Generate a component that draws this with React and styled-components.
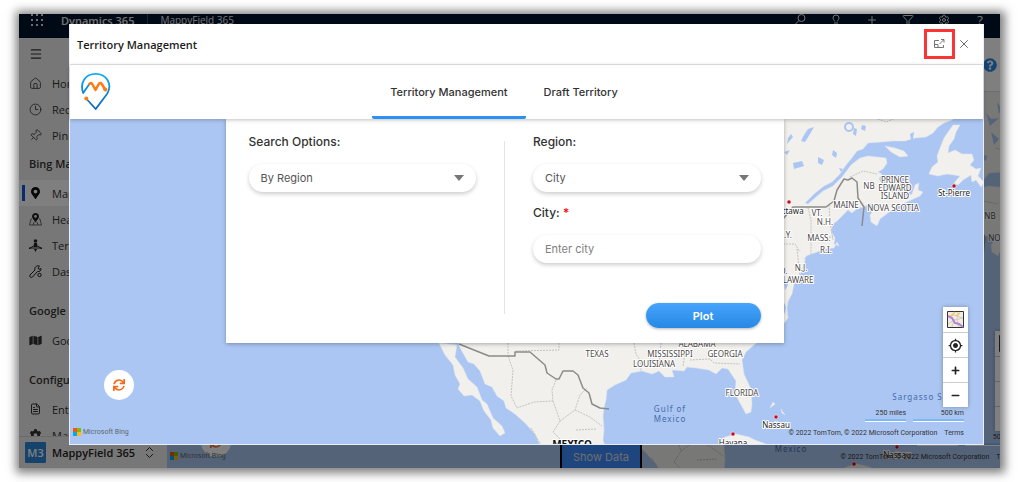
import React from 'react';
import styled, { createGlobalStyle } from 'styled-components';
import {
    ChevronsUpDown, Clock3, FileText, Filter, House, Lightbulb, Menu, Pin, Plus, Settings, X,
} from 'lucide-react';
import { FaCog, FaMap, FaMapMarkedAlt, FaMapMarkerAlt, FaMinus, FaPlus, FaQuestionCircle, FaSync } from 'react-icons/fa';
import { MdMyLocation } from 'react-icons/md';

const uiFont = '"Open Sans", "Noto Sans", sans-serif';
const formFont = 'Inter, Roboto, sans-serif';
const smallFont = 'Roboto, Inter, sans-serif';

const GlobalStyle = createGlobalStyle`
* {
    box-sizing: border-box;
}

body {
    margin: 0;
    background: #fff;
    font-family: ${uiFont};
}

button, input, select {
    font-family: inherit;
}
`;

const Page = styled.div`
    min-height: 100vh;
    padding: 14px 20px 14px 19px;
    display: flex;
`;

// the app and the dialog share one grid cell, so the dialog lies over the app
const Frame = styled.div`
    flex: 1;
    min-width: 0;
    display: grid;
    grid-template: minmax(0, 1fr) / minmax(0, 1fr);
    height: calc(100vh - 28px);
    overflow: hidden;
    box-shadow: 1px 1px 9px 4px rgba(0, 0, 0, 0.5);

    > * {
        grid-area: 1 / 1;
    }
`;

const Shell = styled.div`
    display: flex;
    flex-direction: column;
    min-width: 0;
    min-height: 0;
    overflow: hidden;
    background: #fff;
`;

const TopBar = styled.header`
    display: flex;
    align-items: flex-start;
    height: 24px;
    flex: none;
    padding: 0 14px 0 12px;
    background: #00142e;
    color: #e8e8e8;
    font-size: 11px;
    line-height: 13px;
`;

const Waffle = styled.svg`
    width: 12px;
    height: 12px;
    margin-right: 18px;
`;

const Brand = styled.b`
    font-weight: 600;
    padding-right: 13px;
    border-right: 1px solid #33445c;
`;

const AppName = styled.span`
    font-size: 10px;
    padding-left: 12px;
    flex: 1;
`;

const TopIcons = styled.div`
    display: flex;
    gap: 24px;

    span {
        width: 12px;
        text-align: center;
        font-size: 13px;
    }
`;

const Body = styled.div`
    flex: 1;
    min-height: 0;
    display: flex;
`;

const Sidebar = styled.nav`
    width: 148px;
    flex: none;
    display: flex;
    flex-direction: column;
    background: #efefef;
    color: #333;
    font-size: 11px;
`;

const NavList = styled.div`
    flex: 1;
    min-height: 0;
    overflow: hidden;
`;

const MenuRow = styled.div`
    display: flex;
    align-items: center;
    height: 32px;
    padding-left: 10px;
`;

const NavHeading = styled.div`
    height: 32px;
    line-height: 32px;
    padding-left: 10px;
    font-weight: 600;
    margin-top: ${({ $spaced }) => ($spaced ? '11px' : '0')};
`;

const NavItem = styled.a`
    display: flex;
    align-items: center;
    gap: 10px;
    height: 26px;
    padding-left: 7px;
    border-left: 3px solid transparent;
    color: inherit;
    text-decoration: none;
    white-space: nowrap;
    background: ${({ $active }) => ($active ? '#fff' : 'none')};

    svg {
        flex: none;
        width: 13px;
    }
`;

const ActiveMark = styled.i`
    width: 3px;
    height: 16px;
    margin: 0 -6px 0 -7px;
    background: #0a5be0;
`;

const AreaSwitch = styled.button`
    display: flex;
    align-items: center;
    gap: 6px;
    height: 32px;
    flex: none;
    padding: 0 10px 0 6px;
    border: 0;
    border-top: 1px solid #d5d5d5;
    background: #efefef;
    color: #222;
    font-size: 11px;
    font-weight: 600;
    white-space: nowrap;

    span {
        flex: 1;
        text-align: left;
    }
`;

const AreaBadge = styled.i`
    width: 21px;
    height: 21px;
    line-height: 21px;
    background: #2a86d8;
    color: #fff;
    font-style: normal;
    font-size: 11px;
    border-radius: 1px;
`;

const Workspace = styled.main`
    flex: 1;
    min-width: 0;
    overflow: hidden;
    display: flex;
    flex-direction: column;
`;

const WorkspaceBar = styled.div`
    height: 54px;
    flex: none;
    display: flex;
    align-items: center;
    justify-content: flex-end;
    padding-right: 3px;
    border-bottom: 1px solid #ddd;
    color: #2a86e8;
`;

const WideMap = styled.div`
    flex: 1;
    min-height: 0;
    margin-right: -35px;
    display: grid;
`;

const ShowData = styled.button`
    position: absolute;
    left: 50%;
    bottom: 0;
    transform: translateX(-50%);
    width: 82px;
    height: 23px;
    padding: 0;
    border: solid #000;
    border-width: 0 2px;
    background: #3f8bff;
    color: #ddd;
    font-family: ${formFont};
    font-size: 11px;
`;

const Overlay = styled.div`
    position: relative;
    display: flex;
    min-width: 0;
    min-height: 0;
    padding: 10px 16px 23px 50px;
    background: rgba(0, 0, 0, 0.5);
`;

const Dialog = styled.section`
    flex: 1;
    min-width: 0;
    display: flex;
    flex-direction: column;
    background: #fff;
    border: solid #e8eefb;
    border-width: 0 1px 1px;
`;

const TitleBar = styled.div`
    display: flex;
    align-items: center;
    height: 41px;
    flex: none;
    padding: 0 10px 0 7px;
    border-bottom: 1px solid #e6e6e6;
`;

const Title = styled.h1`
    flex: 1;
    margin: 0;
    font-size: 11px;
    font-weight: 600;
    color: #1c1c1c;
`;

const TitleButton = styled.button`
    display: flex;
    align-items: center;
    justify-content: center;
    width: ${({ $marked }) => ($marked ? '31px' : '18px')};
    height: 30px;
    padding: 0;
    border: ${({ $marked }) => ($marked ? '3px solid #fb3535' : '0')};
    background: none;
    color: #555;
`;

const TabBar = styled.div`
    position: relative;
    z-index: 1;
    display: flex;
    height: 54px;
    flex: none;
    padding: 0 45px 0 10px;
    background: #fff;
    box-shadow: 0 1px 4px rgba(0, 0, 0, 0.25);
`;

const Logo = styled.svg`
    width: 32px;
    height: 40px;
    margin-top: 7px;
    margin-right: -42px;
`;

const Tabs = styled.div`
    flex: 1;
    display: flex;
    justify-content: center;
`;

const Tab = styled.button`
    padding: 0 18px;
    border: 0;
    border-radius: 2px;
    border-top: 3px solid transparent;
    border-bottom: 3px solid ${({ $active }) => ($active ? '#2b90f3' : 'transparent')};
    background: none;
    color: #333;
    font-family: ${formFont};
    font-size: 11px;
    font-weight: 500;
`;

const MapFrame = styled.div`
    position: relative;
    flex: 1;
    min-width: 0;
    min-height: 0;
    overflow: hidden;
    background: #abc6f2;
`;

const MapDrawing = styled.svg`
    position: absolute;
    inset: 0;
    width: 100%;
    height: 100%;
    font-family: "Noto Sans", "Open Sans", sans-serif;
`;

const PanelRow = styled.div`
    position: relative;
    display: flex;
    justify-content: center;
    padding-right: 44px;
`;

const Panel = styled.form`
    display: grid;
    grid-template-columns: 1fr 1px 1fr;
    gap: 28px;
    width: 558px;
    max-width: 100%;
    padding: 13px 23px 15px;
    background: #fff;
    box-shadow: 0 1px 4px rgba(0, 0, 0, 0.3);
`;

const Divider = styled.div`
    margin: 9px 0 14px;
    background: #e4e4e4;
`;

const Column = styled.div`
    display: flex;
    flex-direction: column;
    min-width: 0;
    font-family: ${formFont};
`;

const Label = styled.label`
    margin-bottom: 12px;
    font-size: 12px;
    font-weight: 500;
    line-height: 20px;
    color: #333;

    em {
        color: #f00;
        font-style: normal;
    }
`;

const Field = styled.div`
    display: flex;
    align-items: center;
    height: 28px;
    margin-bottom: 11px;
    padding: 0 12px;
    border-radius: 14px;
    background: #fff;
    box-shadow: 0 2px 4px rgba(0, 0, 0, 0.2);

    select, input {
        flex: 1;
        min-width: 0;
        padding: 0;
        border: 0;
        outline: 0;
        appearance: none;
        background: none;
        color: #555;
        font-size: 11px;
    }

    input::placeholder {
        color: #808080;
        opacity: 1;
    }
`;

const Arrow = styled.i`
    border: 5px solid transparent;
    border-top: 6px solid #777;
    border-bottom: 0;
`;

const PlotButton = styled.button`
    align-self: flex-end;
    width: 115px;
    height: 25px;
    margin-top: 29px;
    border: 0;
    border-radius: 13px;
    background: linear-gradient(#47a3fc, #2689e4);
    box-shadow: 0 1px 3px rgba(0, 0, 0, 0.3);
    color: #fff;
    font-size: 11px;
    font-weight: 600;
`;

const Refresh = styled.button`
    position: absolute;
    left: 34px;
    bottom: ${({ $low }) => ($low ? '11px' : '44px')};
    display: flex;
    align-items: center;
    justify-content: center;
    width: 30px;
    height: 30px;
    padding: 0;
    border: 0;
    border-radius: 50%;
    background: #fff;
    color: #f26a1b;
`;

const BingMark = styled.div`
    position: absolute;
    left: 3px;
    bottom: 7px;
    display: flex;
    align-items: center;
    gap: 2px;
    color: #62666e;
    font-family: ${smallFont};
    font-size: 7px;
    line-height: 10px;
`;

const Controls = styled.div`
    position: absolute;
    right: 15px;
    bottom: 37px;
    display: grid;
    box-shadow: 0 0 4px rgba(0, 0, 0, 0.3);

    button {
        display: flex;
        align-items: center;
        justify-content: center;
        width: 25px;
        height: 25px;
        padding: 0;
        border: 0;
        border-top: 1px solid #ccc;
        background: #fff;
        color: #222;
    }

    button:first-child {
        border-top: 0;
    }
`;

const Legend = styled.div`
    position: absolute;
    right: 19px;
    bottom: 5px;
    display: grid;
    justify-items: end;
    gap: 7px;
    color: #333;
    font-family: ${smallFont};
    font-size: 7px;
    line-height: 11px;

    div {
        display: flex;
        gap: 7px;
    }

    a {
        color: inherit;
        text-decoration: none;
    }
`;

const Scale = styled.span`
    width: ${({ $wide }) => ($wide ? '51px' : '41px')};
    text-align: right;
    border-bottom: 2px solid #7ab8fa;
    box-shadow: 0 1px #fff;
`;

const places = [
    ['NB', 869, 189], ['PRINCE', 895, 183], ['EDWARD', 895, 191], ['ISLAND', 895, 199],
    ['NOVA SCOTIA', 893, 211], ['MAINE', 846, 208], ['VT.', 817, 216], ['N.H.', 825, 225],
    ['MASS.', 819, 241], ['R.I.', 826, 253], ['N.Y.', 785, 238], ['N.J.', 801, 271],
    ['MD.', 780, 274], ['DELAWARE', 793, 283], ['ALABAMA', 697, 347], ['TEXAS', 597, 357],
    ['MISSISSIPPI', 670, 357], ['GEORGIA', 725, 357], ['LOUISIANA', 654, 367], ['FLORIDA', 742, 396],
];

const towns = [
    ['Ottawa', 790, 214, 789, 202], ['St-Pierre', 954, 196, 954, 186],
    ['Nassau', 776, 428, 776, 417], ['Havana', 733, 446, 733, 434],
];

const NorthAmerica = ({ viewBox, align }) => (
    <MapDrawing viewBox={viewBox} preserveAspectRatio={`${align} slice`}>
        <g fill="#f1f0ed" stroke="#dfe5ea" strokeWidth="0.5">
            <path d="M430 50H990L978 104L962 113L952 120L944 123L938 127L933 133L926 137L915 138L905 141L893 141L881 142L868 143L863 149L857 151L851 159L846 165L840 174L832 182L824 186L814 194L805 203L808 204L823 191L833 186L842 177L851 165L860 158L868 156L877 157L886 158L887 163L883 169L878 172L882 174L879 179L883 186L892 192L901 198L912 194L915 185L919 183L918 190L923 192L920 196L909 201L897 206L888 213L880 219L877 226L871 222L870 215L877 206L871 203L864 207L858 208L852 213L848 210L843 215L837 221L833 224L831 231L835 238L834 244L839 246L837 242L834 248L826 249L817 252L806 256L804 264L800 275L797 279L794 284L792 294L788 301L787 309L788 318L782 326L770 336L755 344L746 352L742 360L744 374L751 389L752 404L751 412L746 414L740 403L735 393L736 381L728 369L722 368L716 374L709 370L696 368L687 367L684 371L672 370L674 377L665 377L659 371L652 374L642 371L631 373L626 380L615 385L607 390L606 400L604 408L603 416L604 430L603 440L608 455L612 480H565L555 462L541 447L535 434L525 423L515 414L506 408L504 401L497 396L492 387L485 384L480 371L474 364L468 362L459 346Z" />
            <path d="M439 343L445 355L453 365L455 375L460 384L458 389L464 396L472 395L480 401L484 411L491 420L493 428L500 436L505 433L502 426L493 418L487 404L482 400L477 387L468 379L463 368L455 357L457 345Z" />
            <path d="M885 146L895 148L904 151L908 156L900 157L891 152Z" />
            <path d="M953 125L960 125L956 132L954 139L949 146L948 153L955 150L962 154L972 154L974 160L970 165L976 169L981 168L978 176L984 182L981 187L976 180L972 182L971 175L963 180L958 185L954 183L960 176L947 174L938 176L929 174L932 167L938 162L937 156L940 148L944 138Z" />
            <path d="M719 441L725 437L736 434L749 437L755 440L766 444L777 452L789 460L767 458L745 445L731 444Z" />
            <path d="M770 408L773 402L775 404ZM781 409L785 415L782 413ZM774 421L779 422L777 424Z" />
        </g>
        <g fill="#abc6f2">
            <path d="M804 135L808 129L814 127L810 134L805 142L801 141ZM788 138L791 134L793 137L787 144ZM818 157L824 160L822 165L818 163ZM793 163L802 161L804 166L794 169ZM833 150L837 153L836 158L832 155ZM854 128L857 129L856 136L853 134ZM862 125L866 126L865 131L861 129ZM839 168L843 169L841 172ZM910 134L914 132L913 139L911 140ZM784 152L790 150L787 155ZM865 83L870 89L878 88L869 96ZM870 102L878 109L873 115ZM876 72L881 79L878 84Z" />
            <path d="M803 259L812 255L822 253L812 258ZM783 300L786 307L785 315L782 303ZM783 276L788 285L785 290Z" />
        </g>
        <circle cx="849" cy="127" r="4" fill="none" stroke="#abc6f2" strokeWidth="2" />
        <g fill="none" stroke="#c6c3be" strokeDasharray="2 1">
            <path d="M808 208L811 220V255M829 205L830 222L833 240M811 238L833 237M783 244L795 244L800 252M797 249L800 276M850 177L863 171L877 174M875 118L886 122L900 116" />
            <path d="M508 343V356M559 343V350L516 351M634 343L636 354L640 360L641 371M661 343L659 364M686 343L683 367M690 360L710 359L714 363L740 364M508 356L513 370L511 396L517 408L534 402L553 401L552 390L556 380M553 401L560 421L553 432L563 442M560 421L575 410L580 395L587 388M575 410L590 417L602 426M576 430L596 429M531 428L541 445" />
        </g>
        <g fill="none" stroke="#8b8b8b" strokeWidth="1.5" strokeLinejoin="round">
            <path d="M783 219L793 207H826L834 201L837 190L844 179L848 180L852 178L857 182L858 198L864 207L862 226" />
            <path d="M459 344L489 356H515V352H530L545 365L547 373L556 379H559L563 371H573L578 375L583 388L589 393L592 404L600 408L609 409" />
        </g>
        <g fontSize="8" textAnchor="middle" fill="#4d4848" stroke="#fff" strokeWidth="2" strokeLinejoin="round" paintOrder="stroke">
            {places.map(([name, x, y]) => <text key={name} x={x} y={y}>{name}</text>)}
            {towns.map(([name, x, y]) => <text key={name} x={x} y={y} fill="#222">{name}</text>)}
            <text x="572" y="448" fontSize="10" fontWeight="700" fill="#111">MEXICO</text>
        </g>
        <g fontSize="8" letterSpacing="1" textAnchor="middle" fill="#466ba9">
            <text x="670" y="412">Gulf of</text>
            <text x="670" y="422">Mexico</text>
            <text x="923" y="400">Sargasso Sea</text>
        </g>
        <g fill="#d0021b" stroke="#fff" strokeWidth="0.5">
            {towns.map(([name, , , x, y]) => <circle key={name} cx={x} cy={y} r="2" />)}
        </g>
    </MapDrawing>
);

const MapView = ({ viewBox, align, lowRefresh, children }) => (
    <MapFrame>
        <NorthAmerica viewBox={viewBox} align={align} />
        {children}
        <Refresh type="button" aria-label="Refresh" $low={lowRefresh}><FaSync size={12} /></Refresh>
        <BingMark>
            <svg width="8" height="8" viewBox="0 0 8 8">
                <path fill="#f35325" d="M0 0h4v4H0z" />
                <path fill="#81bc06" d="M4 0h4v4H4z" />
                <path fill="#05a6f0" d="M0 4h4v4H0z" />
                <path fill="#ffba08" d="M4 4h4v4H4z" />
            </svg>
            Microsoft Bing
        </BingMark>
        <Legend>
            <div>
                <Scale>250 miles</Scale>
                <Scale $wide>500 km</Scale>
            </div>
            <div>
                <span>© 2022 TomTom, © 2022 Microsoft Corporation</span>
                <a href="#terms">Terms</a>
            </div>
        </Legend>
        <Controls>
            <button type="button" aria-label="Map style">
                <svg width="17" height="17" viewBox="0 0 17 17">
                    <path fill="#efece2" stroke="#333" d="M.5.5h16v16H.5z" />
                    <path fill="none" stroke="#d2cec0" d="M1 6l6-2 9 3M5 16l2-8M11 1l-1 8 2 7M1 13l6-4 9-2" />
                    <path fill="none" stroke="#f7c55c" strokeWidth="1.5" d="M4 5l4-4M9 5l4-3" />
                    <path fill="none" stroke="#b87fd0" strokeWidth="2" d="M1 5l4 2 3 5 4 1 4 3" />
                </svg>
            </button>
            <button type="button" aria-label="Locate me"><MdMyLocation size={15} /></button>
            <button type="button" aria-label="Zoom in"><FaPlus size={9} /></button>
            <button type="button" aria-label="Zoom out"><FaMinus size={9} /></button>
        </Controls>
    </MapFrame>
);

const SearchIcon = () => (
    <svg width="12" height="12" viewBox="0 0 12 12" fill="none" stroke="currentColor">
        <circle cx="7.500" cy="4" r="3.500" />
        <path d="M5 6.500L.5 11" />
    </svg>
);

const HeatMapIcon = () => (
    <svg width="13" height="13" viewBox="0 0 13 13" fill="none" stroke="#444">
        <path d="M3 6H2L.5 12h12L11 6h-1M4 12l1-3M9 12l-1-3" strokeWidth="0.8" />
        <path fill="#222" stroke="none" fillRule="evenodd" d="M6.500 0C8.500 0 10 1.500 10 3.500c0 2-2 3.500-3.500 6C5 7 3 5.500 3 3.500 3 1.500 4.500 0 6.500 0zm0 2a1.400 1.400 0 100 2.800 1.400 1.400 0 000-2.800z" />
    </svg>
);

const TerritoryIcon = () => (
    <svg width="13" height="13" viewBox="0 0 13 13" fill="#222">
        <circle cx="6.500" cy="2" r="1.800" />
        <path d="M5 4h3l.5 4h-4z" />
        <path d="M4.500 7L1 9l11 0-3.500-2" fill="none" stroke="#222" />
        <path d="M0 8l2 2H0zM13 8l-2 2h2zM5 10h3l-1.500 3z" />
    </svg>
);

const DashboardIcon = () => (
    <svg width="13" height="13" viewBox="0 0 13 13" fill="none" stroke="#222">
        <path d="M1 10l5-5c-1-3 2-5 4.500-4L9 3l1 1.500 2-1c.5 2-1.500 3.500-3.500 3L3.500 12C2 13 0 12 1 10z" />
        <circle cx="10.500" cy="10" r="1.700" />
    </svg>
);

const nav = [
    {
        items: [
            ['Home', <House size={13} strokeWidth={1.5} />],
            ['Recent', <Clock3 size={13} strokeWidth={1.5} />],
            ['Pinned', <Pin size={13} strokeWidth={1.5} transform="rotate(45)" />],
        ],
    },
    {
        heading: 'Bing Maps',
        items: [
            ['Maps', <FaMapMarkerAlt size={12} color="#111" />, true],
            ['Heat Map', <HeatMapIcon />],
            ['Territory', <TerritoryIcon />],
            ['Dashboard', <DashboardIcon />],
        ],
    },
    { heading: 'Google Maps', spaced: true, items: [['Google', <FaMap size={11} />]] },
    {
        heading: 'Configuration',
        spaced: true,
        items: [
            ['Entity', <FileText size={12} />],
            ['Mapping', <FaCog size={12} />],
        ],
    },
];

const SideNav = () => (
    <Sidebar>
        <NavList>
            <MenuRow><Menu size={14} strokeWidth={2} /></MenuRow>
            {nav.map(({ heading, spaced, items }) => (
                <React.Fragment key={heading || 'top'}>
                    {heading && <NavHeading $spaced={spaced}>{heading}</NavHeading>}
                    {items.map(([name, icon, active]) => (
                        <NavItem key={name} href="#nav" $active={active}>
                            {active && <ActiveMark />}
                            {icon}
                            {name}
                        </NavItem>
                    ))}
                </React.Fragment>
            ))}
        </NavList>
        <AreaSwitch type="button">
            <AreaBadge>M3</AreaBadge>
            <span>MappyField 365</span>
            <ChevronsUpDown size={15} strokeWidth={1.5} />
        </AreaSwitch>
    </Sidebar>
);

const Header = () => (
    <TopBar>
        <Waffle viewBox="0 0 12 12" fill="#ddd">
            {[0, 5, 10].map((y) => [0, 5, 10].map((x) => (
                <rect key={`${x}-${y}`} x={x} y={y} width="2" height="2" />
            )))}
        </Waffle>
        <Brand>Dynamics 365</Brand>
        <AppName>MappyField 365</AppName>
        <TopIcons>
            <SearchIcon />
            <Lightbulb size={12} strokeWidth={2} />
            <Plus size={12} strokeWidth={2} />
            <Filter size={12} strokeWidth={2} />
            <Settings size={12} strokeWidth={2} />
            <span>?</span>
        </TopIcons>
    </TopBar>
);

const SearchPanel = () => (
    <Panel>
        <Column>
            <Label htmlFor="option">Search Options:</Label>
            <Field>
                <select id="option"><option>By Region</option></select>
                <Arrow />
            </Field>
        </Column>
        <Divider />
        <Column>
            <Label htmlFor="region">Region:</Label>
            <Field>
                <select id="region"><option>City</option></select>
                <Arrow />
            </Field>
            <Label htmlFor="city">City: <em>*</em></Label>
            <Field>
                <input id="city" type="text" placeholder="Enter city" />
            </Field>
            <PlotButton type="button">Plot</PlotButton>
        </Column>
    </Panel>
);

const TerritoryDialog = () => (
    <Dialog role="dialog" aria-labelledby="dialog-title">
        <TitleBar>
            <Title id="dialog-title">Territory Management</Title>
            <TitleButton type="button" aria-label="Expand" $marked>
                <svg width="11" height="10" viewBox="0 0 11 10" fill="none" stroke="#666" strokeWidth="0.9">
                    <path d="M5 1.500H.5v7h9V6M.5 5.500H4v3M5.500 5l4-4M7 .5h3v3" />
                </svg>
            </TitleButton>
            <TitleButton type="button" aria-label="Close"><X size={14} strokeWidth={1.5} /></TitleButton>
        </TitleBar>
        <TabBar>
            <Logo viewBox="0 0 32 40" fill="none" strokeWidth="1.800" strokeLinecap="round" strokeLinejoin="round">
                <defs>
                    <linearGradient id="pin" x1="0" y1="0" x2="0" y2="1">
                        <stop offset="0" stopColor="#16aaf0" />
                        <stop offset="1" stopColor="#0866bd" />
                    </linearGradient>
                </defs>
                <path stroke="url(#pin)" d="M9 12.500L3.200 21C-.5 11 5 1.800 15.700 1.800c11 0 17 10.500 11.500 20L15.700 37 7 27.500" />
                <path stroke="#ff7a12" strokeWidth="2.500" d="M9.500 12c1-1.500 2-1 2.700 0l3.300 6 3.300-6c.8-1.200 2-1.300 3 0l3 5" />
                <circle cx="6.300" cy="26.500" r="2" fill="#ff7a12" />
                <circle cx="25.300" cy="17.500" r="2" fill="#ff7a12" />
            </Logo>
            <Tabs role="tablist">
                <Tab type="button" role="tab" aria-selected="true" $active>Territory Management</Tab>
                <Tab type="button" role="tab" aria-selected="false">Draft Territory</Tab>
            </Tabs>
        </TabBar>
        <MapView viewBox="70 119 913 325" align="xMaxYMin">
            <PanelRow><SearchPanel /></PanelRow>
        </MapView>
    </Dialog>
);

const App = () => (
    <>
        <GlobalStyle />
        <Page>
            <Frame>
                <Shell>
                    <Header />
                    <Body>
                        <SideNav />
                        <Workspace>
                            <WorkspaceBar><FaQuestionCircle size={14} /></WorkspaceBar>
                            <WideMap>
                                <MapView viewBox="46 62 868 376" align="xMaxYMax" lowRefresh>
                                    <ShowData type="button">Show Data</ShowData>
                                </MapView>
                            </WideMap>
                        </Workspace>
                    </Body>
                </Shell>
                <Overlay>
                    <TerritoryDialog />
                </Overlay>
            </Frame>
        </Page>
    </>
);

export default App;
